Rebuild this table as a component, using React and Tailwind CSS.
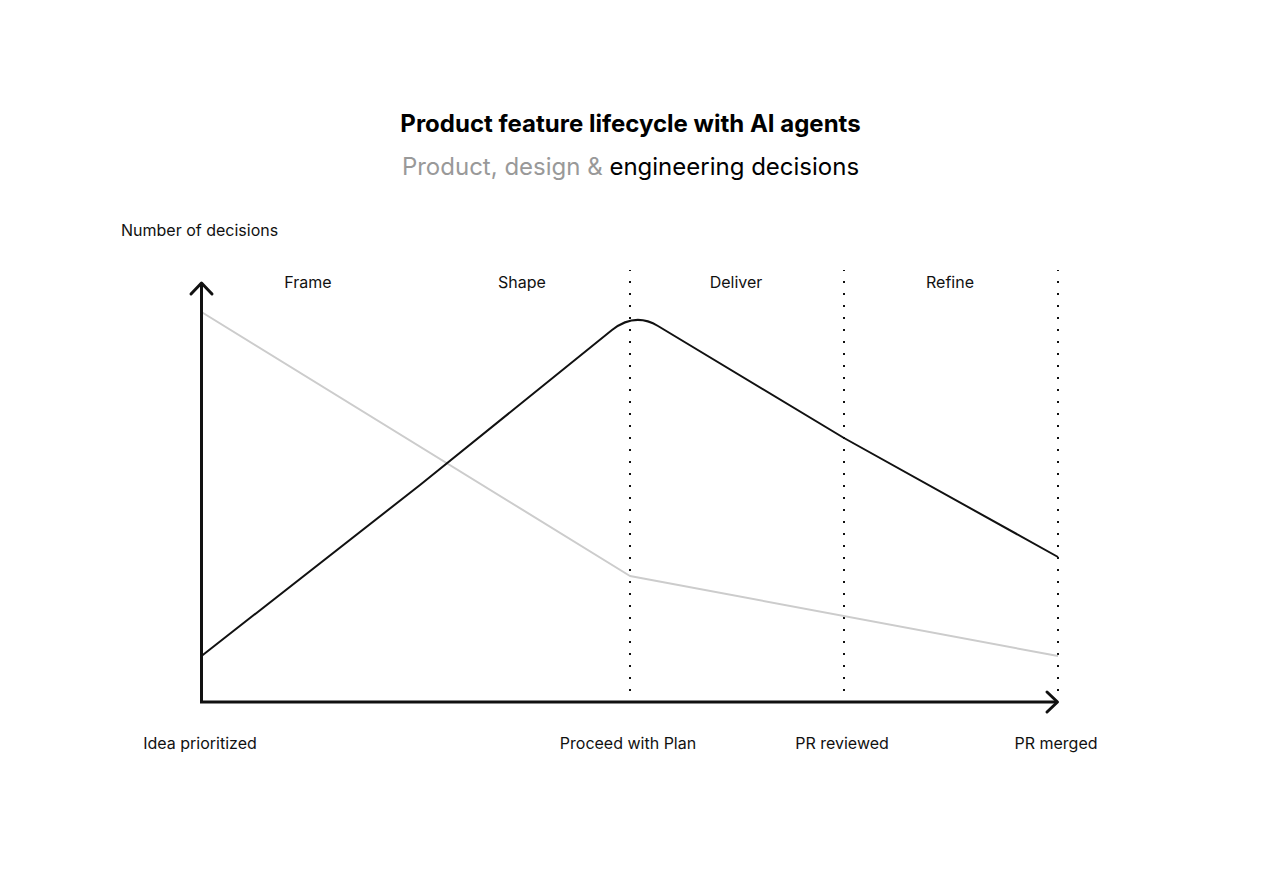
const phases = ['Frame', 'Shape', 'Deliver', 'Refine'];

const milestones = [
  { label: 'Idea prioritized', ml: 'ml-[100px]' },
  { label: 'Proceed with Plan', ml: 'ml-[228px]' },
  { label: 'PR reviewed', ml: 'ml-[14px]' },
  { label: 'PR merged', ml: 'ml-[14px]' },
];

const ChartDrawing = () => (
  <svg
    className="absolute left-0 top-0"
    width="1261"
    height="490"
    viewBox="0 270 1261 490"
    fill="none"
  >
    {/* phase boundaries */}
    {[630, 844, 1058].map((x) => (
      <line
        key={x}
        x1={x}
        y1="269"
        x2={x}
        y2="693"
        stroke="#111"
        strokeWidth="2"
        strokeDasharray="2 10"
      />
    ))}

    {/* product/design decisions */}
    <polyline
      points="201.5,312 630,576 1058,656"
      stroke="#cccccc"
      strokeWidth="2"
      strokeLinejoin="round"
    />

    {/* engineering decisions */}
    <path
      d="M201.5 656 L420 485 L612 330 Q635 312 658 326 L844 438 L1058 557"
      stroke="#111"
      strokeWidth="2"
      strokeLinejoin="round"
    />

    {/* axes */}
    <path d="M201.5 283 L201.5 702 L1057 702" stroke="#111" strokeWidth="3" />
    <path d="M191 294 L201.5 283 L212 294" stroke="#111" strokeWidth="3" strokeLinecap="round" strokeLinejoin="round" />
    <path d="M1047 692 L1057.5 702 L1047 712" stroke="#111" strokeWidth="3" strokeLinecap="round" strokeLinejoin="round" />
  </svg>
);

export default function App() {
  return (
    <div
      className="h-[874px] w-full bg-white text-[#111]"
      style={{ fontFamily: 'Inter, "Noto Sans", sans-serif' }}
    >
      <div className="flex flex-col items-center pt-[108px]">
        <h1 className="text-[24px] font-bold leading-[32px] text-black">
          Product feature lifecycle with AI agents
        </h1>
        <p className="mt-[11px] text-[24px] leading-[32px]">
          <span className="text-[#999]">Product, design &amp; </span>
          <span className="text-black">engineering decisions</span>
        </p>
      </div>

      <div className="mt-[35px] pl-[121px] text-[16px] leading-[24px]">Number of decisions</div>

      <div className="relative mt-[28px] w-[1261px]">
        <ChartDrawing />
        <div className="relative flex pl-[201px] text-[16px] leading-[24px]">
          {phases.map((p) => (
            <div key={p} className="w-[214px] text-center">
              {p}
            </div>
          ))}
        </div>
        <div className="h-[437px]" />
        <div className="relative flex text-[16px] leading-[24px]">
          {milestones.map((m) => (
            <div key={m.label} className={`${m.ml} w-[200px] text-center`}>
              {m.label}
            </div>
          ))}
        </div>
      </div>
    </div>
  );
}
